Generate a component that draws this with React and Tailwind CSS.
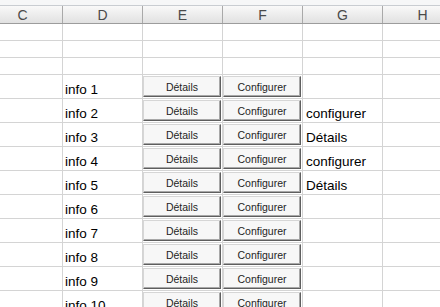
import React from "react";

const cols = ["C", "D", "E", "F", "G", "H"];
const gText = { 2: "configurer", 3: "Détails", 4: "configurer", 5: "Détails" };

function Btn({ label }) {
  return (
    <div className="h-[21px] w-[78px] mt-[1px] bg-[#f7f7f7] border border-t-[#d6d6d6] border-l-[#d6d6d6] border-r-[#5e5e5e] border-b-[#5e5e5e] shadow-[inset_-1px_-1px_0_#a8a8a8] flex items-center justify-center text-[10.5px] text-[#1e1e1e] leading-none">
      <span className="mt-[1px]">{label}</span>
    </div>
  );
}

export default function App() {
  const infos = Array.from({ length: 10 }, (_, i) => i + 1);
  return (
    <div className="w-[440px] h-[307px] overflow-hidden bg-white font-['Liberation_Sans',Arial,sans-serif]">
      <div className="h-[6px] bg-[#f6f7f8] border-b border-[#c9cdd2]" />
      <div className="ml-[-17px] w-[480px]">
        {/* header */}
        <div className="grid grid-cols-[80px_80px_80px_80px_80px_80px] h-[18px] bg-gradient-to-b from-[#f9f9f9] to-[#e1e1e1] border-b border-[#9c9c9c]">
          {cols.map((c) => (
            <div key={c} className="border-r border-[#a9a9a9] flex items-center justify-center text-[14px] text-[#4a4a4a] leading-none">
              {c}
            </div>
          ))}
        </div>
        {/* empty rows */}
        {[0, 1, 2].map((r) => (
          <div key={r} className="grid grid-cols-[80px_80px_80px_80px_80px_80px] h-[17px]">
            {cols.map((c) => (
              <div key={c} className="border-r border-b border-[#d4d4d4]" />
            ))}
          </div>
        ))}
        {infos.map((n) => (
          <div key={n} className="grid grid-cols-[80px_80px_80px_80px_80px_80px] h-[24px]">
            <div className="border-r border-b border-[#d4d4d4]" />
            <div className="border-r border-b border-[#d4d4d4] flex items-end pl-[2px] pb-[1px] text-[13.5px] text-black leading-none">
              <span className="mb-[1px]">info {n}</span>
            </div>
            <div className="border-r border-b border-[#d4d4d4]">
              <Btn label="Détails" />
            </div>
            <div className="border-r border-b border-[#d4d4d4]">
              <Btn label="Configurer" />
            </div>
            <div className="border-r border-b border-[#d4d4d4] flex items-end pl-[3px] pb-[2px] text-[13.5px] text-black leading-none">
              {gText[n] || ""}
            </div>
            <div className="border-r border-b border-[#d4d4d4]" />
          </div>
        ))}
      </div>
    </div>
  );
}
